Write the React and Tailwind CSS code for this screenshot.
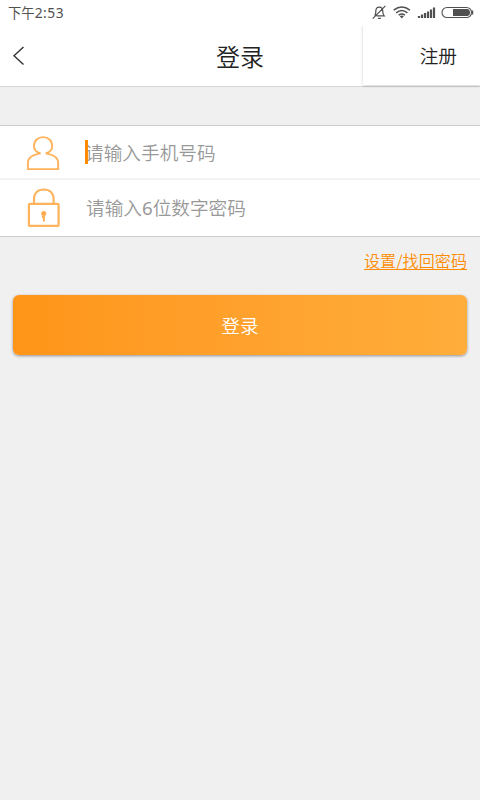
import React from "react";

function StatusBar() {
  return (
    <div className="flex h-[25px] items-center justify-between pl-2 pr-[6px] text-[#505050]">
      <div className="flex items-center text-[13.33px] leading-[20px]">
        <span>下午</span>
        <span className="font-['Noto_Sans',sans-serif] text-[13.8px] tracking-[0.5px]">2:53</span>
      </div>
      <svg width="104" height="25" viewBox="370 0 104 25" fill="none" stroke="#505050">
        <path d="M374.6 15.7c1-1 1.2-2 1.2-4.2 0-3 1.2-4.4 3.4-4.4s3.6 1.4 3.6 4.4c0 2.500.3 3.300 1.4 4.400H376.500M378 18.400h2.800M385.400 5.800L372.700 18.700" strokeWidth="1.2" />
        <path d="M393.700 10.200Q401.800 3.800 409.900 10.200M396.200 12.800Q401.800 8.200 407.400 12.800M398.700 15.200Q401.800 12.900 404.900 15.200" strokeWidth="1.6" />
        <path d="M399.800 16.200Q401.800 15 403.800 16.200L401.800 18.400Z" fill="#505050" stroke="none" />
        <path d="M419 18v-2M422 18v-3.500M425 18v-5M428 18v-6.500M431 18v-8.500M434 18V7.500" strokeWidth="2.200" />
        <rect x="442" y="7.500" width="29.500" height="10" rx="5" strokeWidth="1.1" />
        <path d="M453 9h14.500q2.500.500 2.500 3.500t-2.500 3.500H453z" fill="#505050" stroke="none" />
        <path d="M472.500 10.500v4" strokeWidth="1.500" />
      </svg>
    </div>
  );
}

function Header() {
  return (
    <header className="grid h-[61px] grid-cols-[117px_1fr_117px] text-[#222]">
      <button className="flex items-center pl-[12px]" aria-label="返回">
        <svg width="13" height="20" viewBox="0 0 13 20" fill="none" stroke="#333" strokeWidth="1.4">
          <path d="M11.500 1L2 9.800l9.500 8.800" />
        </svg>
      </button>
      <h1 className="flex items-center justify-center text-[24px] font-[350]">登录</h1>
      <button className="flex h-[60px] items-center justify-end bg-white pr-[23px] text-[18.67px] font-[350] shadow-[0_1px_3px_rgba(0,0,0,0.2)] [clip-path:inset(0_0_-3px_-3px)]">
        注册
      </button>
    </header>
  );
}

function UserIcon() {
  return (
    <svg width="34" height="36" viewBox="26 135 34 36" fill="none" stroke="#ffb35c" strokeWidth="1.9">
      <path d="M40.600 153.400C36.300 152.500 34 150 34 146.100C34 140.500 38 137.100 43.100 137.100S52.200 140.500 52.200 146.100C52.200 150 49.900 152.500 45.600 153.400C53.500 154.700 58.200 158.300 58.200 162.800V169.100H27.900V162.800C27.900 158.300 32.700 154.700 40.600 153.400Z" />
    </svg>
  );
}

function LockIcon() {
  return (
    <svg width="34" height="40" viewBox="27 188 34 40" fill="none" stroke="#ffb35c" strokeWidth="2.200">
      <rect x="28.900" y="203.900" width="29.700" height="22" rx="0.800" />
      <path d="M34 203.500V199.500C34 193 38 189.500 43.800 189.500S53.600 193 53.600 199.500V203.500" />
      <circle cx="43.700" cy="213.400" r="2.500" fill="#ffad50" stroke="none" />
      <path d="M43.900 214v7.500M43.500 217h-1.500" stroke="#ffad50" strokeWidth="2" />
    </svg>
  );
}

export default function App() {
  return (
    <div className="flex h-[800px] w-[480px] flex-col overflow-hidden bg-[#f0f0f0] font-['Noto_Sans_CJK_SC',sans-serif] font-normal">
      <div className="h-[87px] border-b border-[#d5d5d5] bg-white">
        <StatusBar />
        <Header />
      </div>

      <div className="mt-[38px] h-[112px] border-y border-[#cdcdcd] bg-white text-[18.67px] font-[350] text-[#999]">
        <label className="flex h-[54px] items-center border-b-2 border-[#f3f3f3] pl-[26px]">
          <span className="pt-[2px]">
            <UserIcon />
          </span>
          <span className="relative -mt-px ml-[25px]">
            请输入手机号码
            <i className="absolute top-[2px] left-0 h-[24px] w-[3px] bg-[#ff8c00]" />
          </span>
        </label>
        <label className="flex h-[56px] items-center pl-[27px]">
          <LockIcon />
          <span className="-mt-px ml-[25px]">
            请输入<span className="font-['Noto_Sans',sans-serif] font-normal">6</span>位数字密码
          </span>
        </label>
      </div>

      <div className="flex h-[58px] justify-end pr-[13px] pt-[11px]">
        <a className="h-[24px] text-[16px] leading-[24px] font-[350] tracking-[0.1px] text-[#ff8c00] underline decoration-1 underline-offset-[2px]">设置/找回密码</a>
      </div>

      <button className="mx-[13px] h-[60px] rounded-[6px] bg-linear-to-r from-[#ff9518] to-[#ffad3b] text-[18.67px] font-[350] text-white shadow-[0_1px_3px_rgba(0,0,0,0.4)]">
        登录
      </button>
    </div>
  );
}
